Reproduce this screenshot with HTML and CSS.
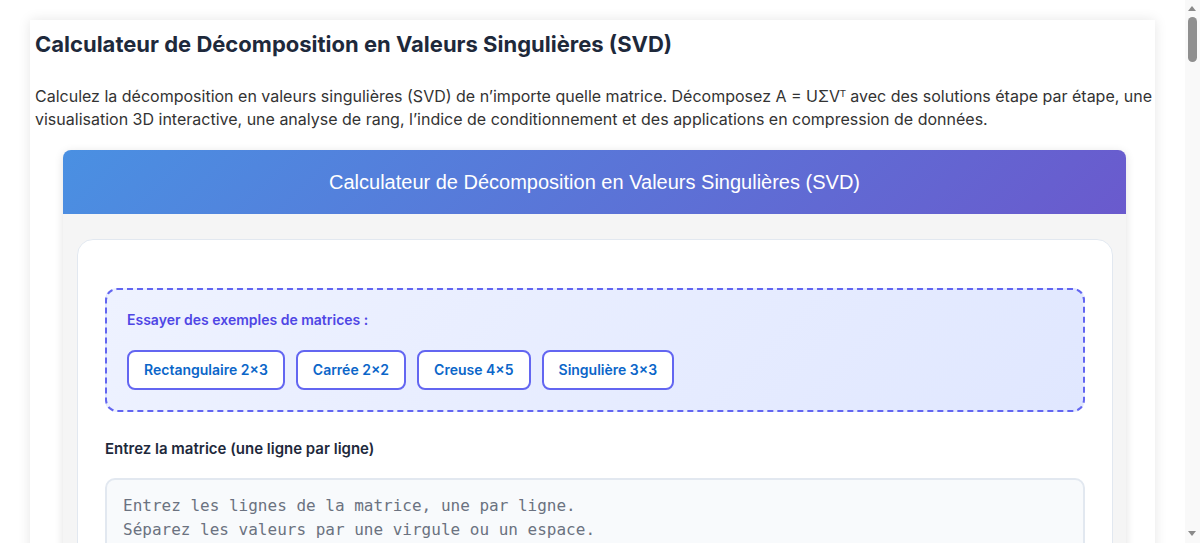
FILE: index.html
```html
<!DOCTYPE html>
<html lang="fr">
<head>
<meta charset="utf-8">
<title>Calculateur SVD</title>
<link rel="stylesheet" href="styles.css">
</head>
<body>
<main class="page">
  <h1 class="page-title">Calculateur de Décomposition en Valeurs Singulières (SVD)</h1>
  <p class="page-intro">Calculez la décomposition en valeurs singulières (SVD) de n’importe quelle matrice. Décomposez A = UΣVᵀ avec des solutions étape par étape, une visualisation 3D interactive, une analyse de rang, l’indice de conditionnement et des applications en compression de données.</p>

  <section class="calc">
    <header class="calc-head">Calculateur de Décomposition en Valeurs Singulières (SVD)</header>
    <div class="calc-body">
      <div class="calc-card">
        <div class="examples">
          <div class="examples-label">Essayer des exemples de matrices :</div>
          <div class="examples-list">
            <button class="example-btn" type="button">Rectangulaire 2×3</button>
            <button class="example-btn" type="button">Carrée 2×2</button>
            <button class="example-btn" type="button">Creuse 4×5</button>
            <button class="example-btn" type="button">Singulière 3×3</button>
          </div>
        </div>

        <label class="field-label" for="matrix">Entrez la matrice (une ligne par ligne)</label>
        <textarea id="matrix" class="matrix-input" rows="6" placeholder="Entrez les lignes de la matrice, une par ligne.
Séparez les valeurs par une virgule ou un espace.
Exemple :
1, 2, 3
4, 5, 6"></textarea>

        <div class="options">
          <label class="option"><input type="checkbox" checked> Afficher les étapes détaillées</label>
          <label class="option"><input type="checkbox" checked> Visualisation 3D</label>
          <label class="option"><input type="checkbox"> Compression de rang k</label>
        </div>

        <button class="compute-btn" type="button">Calculer la SVD</button>
      </div>
    </div>
  </section>

  <article class="guide">
    <h2>Qu’est-ce que la décomposition en valeurs singulières ?</h2>
    <p>La décomposition en valeurs singulières (SVD) factorise toute matrice réelle A de taille m×n en un produit de trois matrices : A = UΣVᵀ. La matrice U est orthogonale de taille m×m, Σ est une matrice diagonale rectangulaire contenant les valeurs singulières positives ou nulles, et V est orthogonale de taille n×n.</p>
    <p>Contrairement à la diagonalisation, la SVD existe pour toutes les matrices, qu’elles soient carrées, rectangulaires, singulières ou non. C’est l’un des outils les plus puissants de l’algèbre linéaire numérique.</p>

    <h2>Comment utiliser ce calculateur</h2>
    <p>Saisissez votre matrice ligne par ligne dans la zone de texte, en séparant les valeurs par des virgules ou des espaces. Vous pouvez aussi choisir l’un des exemples proposés pour découvrir rapidement le fonctionnement de l’outil.</p>
    <p>Cliquez ensuite sur « Calculer la SVD » pour obtenir les matrices U, Σ et Vᵀ, les valeurs singulières, le rang, l’indice de conditionnement et une visualisation de la transformation.</p>

    <h2>Interprétation géométrique</h2>
    <p>Toute transformation linéaire peut être décrite comme une rotation (Vᵀ), suivie d’un étirement le long des axes (Σ), puis d’une seconde rotation (U). La sphère unité est ainsi transformée en un ellipsoïde dont les demi-axes ont pour longueurs les valeurs singulières.</p>

    <h2>Rang et indice de conditionnement</h2>
    <p>Le rang d’une matrice est égal au nombre de valeurs singulières non nulles. L’indice de conditionnement κ(A) = σ₁ / σᵣ mesure la sensibilité de la matrice aux perturbations.</p>

    <h2>Approximation de rang faible</h2>
    <p>Selon le théorème d’Eckart–Young, la meilleure approximation de rang k d’une matrice A s’obtient en ne conservant que les k plus grandes valeurs singulières et les vecteurs associés : Aₖ = UₖΣₖVₖᵀ. Cette propriété est à la base de nombreuses techniques de compression et de réduction de dimension.</p>
  </article>
</main>

<!-- page scroll rail, drawn on top of the right edge -->
<div class="scroll-rail" aria-hidden="true">
  <span class="rail-arrow rail-up"></span>
  <span class="rail-thumb"></span>
  <span class="rail-arrow rail-down"></span>
</div>
</body>
</html>
```

FILE: styles.css
```css
* {
  box-sizing: border-box;
}

html, body {
  margin: 0;
  background: #ffffff;
}

body {
  padding: 20px 15px 40px 0;
  font-family: Inter, "Noto Sans", "Liberation Sans", sans-serif;
  color: #333333;
}

/* scroll rail */
.scroll-rail {
  position: fixed;
  top: 0;
  right: 0;
  bottom: 0;
  width: 15px;
  background: #f9f9f9;
}

.rail-thumb {
  position: absolute;
  top: 17px;
  left: 3px;
  width: 9px;
  height: 45px;
  border-radius: 5px;
  background: #8f8f8f;
}

.rail-arrow {
  position: absolute;
  left: 3px;
  width: 0;
  height: 0;
  border-left: 4.5px solid transparent;
  border-right: 4.5px solid transparent;
}

.rail-up {
  top: 6px;
  border-bottom: 5px solid #8a8a8a;
}

.rail-down {
  bottom: 7px;
  border-top: 5px solid #8a8a8a;
}

.page {
  max-width: 1125px;
  margin: 0 auto;
  padding: 10px 0 40px 5px;
  background: #ffffff;
  box-shadow: 0 0 12px rgba(0, 0, 0, 0.1);
}

.page-title {
  margin: 0;
  font-size: 22px;
  line-height: 28px;
  font-weight: 700;
  color: #1e293b;
}

.page-intro {
  margin: 27px 0 19px;
  font-size: 16px;
  line-height: 23px;
  color: #333333;
}

/* calculator widget */
.calc {
  width: 1063px;
  margin: 0 0 40px 28px;
  border-radius: 8px;
  overflow: hidden;
  background: #f5f5f5;
  box-shadow: 0 2px 10px rgba(0, 0, 0, 0.12);
}

.calc-head {
  height: 64px;
  display: flex;
  align-items: center;
  justify-content: center;
  background: linear-gradient(135deg, #4a90e2 0%, #6a5acd 100%);
  color: #ffffff;
  font-family: "Liberation Sans", Arial, sans-serif;
  font-size: 20px;
}

.calc-body {
  padding: 25px 13px 30px 14px;
}

.calc-card {
  background: #ffffff;
  border: 1px solid #e2e8f0;
  border-radius: 16px;
  padding: 48px 27px 32px;
}

.examples {
  border: 2px dashed #6366f1;
  border-radius: 12px;
  background: linear-gradient(135deg, #eef2ff 0%, #e0e7ff 100%);
  padding: 20px;
  margin-bottom: 26px;
}

.examples-label {
  font-size: 14px;
  line-height: 20px;
  font-weight: 600;
  color: #4f46e5;
  margin-bottom: 20px;
}

.examples-list {
  display: flex;
  flex-wrap: wrap;
  gap: 11px;
}

.example-btn {
  font-family: Inter, "Liberation Sans", sans-serif;
  font-size: 14px;
  line-height: 20px;
  font-weight: 600;
  color: #0b66c9;
  background: #ffffff;
  border: 2px solid #6366f1;
  border-radius: 8px;
  padding: 8px 15px;
  cursor: pointer;
}

.field-label {
  display: block;
  font-size: 15px;
  line-height: 22px;
  font-weight: 600;
  color: #1e293b;
  margin-bottom: 18px;
}

.matrix-input {
  display: block;
  width: 100%;
  height: 170px;
  resize: vertical;
  padding: 14px 16px;
  border: 2px solid #e2e8f0;
  border-radius: 10px;
  background: #f8fafc;
  font-family: "DejaVu Sans Mono", monospace;
  font-size: 16px;
  line-height: 24px;
  color: #1e293b;
}

.matrix-input::placeholder {
  color: #6b7280;
}

.options {
  display: flex;
  gap: 24px;
  margin: 22px 0;
  font-size: 15px;
  color: #334155;
}

.option {
  display: flex;
  align-items: center;
  gap: 8px;
}

.compute-btn {
  display: block;
  width: 100%;
  padding: 14px;
  border: none;
  border-radius: 10px;
  background: linear-gradient(135deg, #4a90e2 0%, #6a5acd 100%);
  color: #ffffff;
  font-family: Inter, sans-serif;
  font-size: 17px;
  font-weight: 600;
}

/* article below the widget */
.guide {
  padding: 0 28px;
}

.guide h2 {
  margin: 48px 0 16px;
  font-size: 22px;
  line-height: 30px;
  color: #1e293b;
}

.guide p {
  margin: 0 0 18px;
  font-size: 16px;
  line-height: 26px;
}
```
